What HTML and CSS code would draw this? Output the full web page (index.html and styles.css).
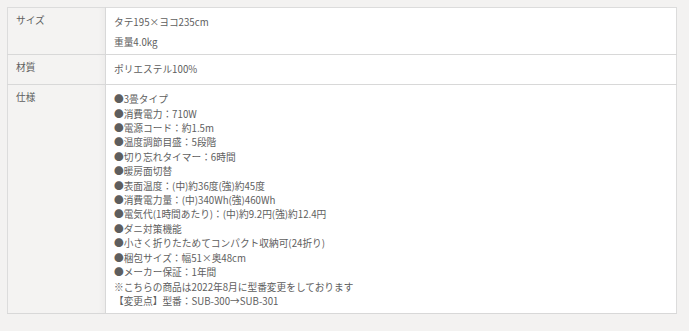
FILE: index.html
```html
<!DOCTYPE html>
<html lang="ja">
<head>
<meta charset="utf-8">
<link rel="stylesheet" href="styles.css">
</head>
<body>
<table class="spec">
  <tr>
    <th class="label">サイズ</th>
    <td class="value">
      <p class="para">タテ195×ヨコ235cm</p>
      <p class="para">重量4.0kg</p>
    </td>
  </tr>
  <tr>
    <th class="label">材質</th>
    <td class="value">ポリエステル100%</td>
  </tr>
  <tr>
    <th class="label">仕様</th>
    <td class="value">
      ●3畳タイプ<br>
      ●消費電力：710W<br>
      ●電源コード：約1.5m<br>
      ●温度調節目盛：5段階<br>
      ●切り忘れタイマー：6時間<br>
      ●暖房面切替<br>
      ●表面温度：(中)約36度(強)約45度<br>
      ●消費電力量：(中)340Wh(強)460Wh<br>
      ●電気代(1時間あたり)：(中)約9.2円(強)約12.4円<br>
      ●ダニ対策機能<br>
      ●小さく折りたためてコンパクト収納可(24折り)<br>
      ●梱包サイズ：幅51×奥48cm<br>
      ●メーカー保証：1年間<br>
      ※こちらの商品は2022年8月に型番変更をしております<br>
      【変更点】型番：SUB-300→SUB-301
    </td>
  </tr>
</table>
</body>
</html>
```

FILE: styles.css
```css
html, body {
  margin: 0;
  padding: 0;
  background: #f3f2f1;
}
body {
  padding: 7px 0 0 7px;
  font-family: "Noto Sans CJK JP", "Noto Sans", sans-serif;
  font-size: 9.7px;
  color: #5e5e5e;
}
.spec {
  width: 670px;
  border-collapse: collapse;
  border: 1px solid #dcdcdc;
}
.label {
  width: 82px;
  background: #f4f3f2;
  border-right: 1px solid #d8d8d8;
  border-bottom: 1px solid #d8d8d8;
  font-weight: normal;
  text-align: left;
  vertical-align: top;
  padding: 5px 7px 9.5px 8px;
  line-height: 14.4px;
  box-shadow: inset -6px 0 6px -4px rgba(0,0,0,0.04);
}
.value {
  background: #fff;
  border-bottom: 1px solid #d8d8d8;
  vertical-align: top;
  padding: 7px 8px 5px 8px;
  line-height: 14.4px;
}
.para {
  margin: 0 0 5.5px;
}
.para:last-child {
  margin-bottom: 0;
}
```
